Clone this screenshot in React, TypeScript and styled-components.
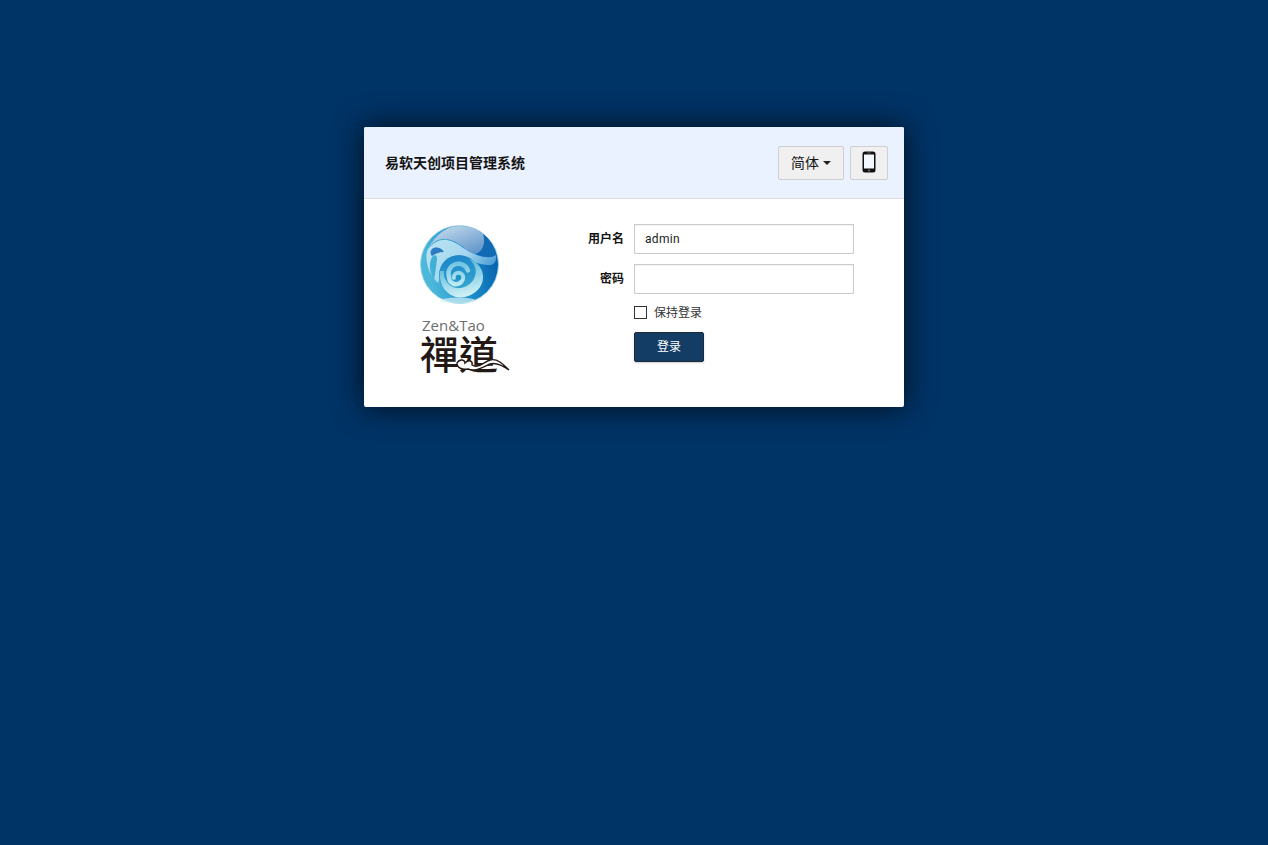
import React from 'react';
import styled, { createGlobalStyle } from 'styled-components';

const colors = {
  page: '#003366',
  head: '#EBF2FF',
  line: '#DDDDDD',
  ink: '#141414',
  field: '#CCCCCC',
  button: '#143D66',
};

const GlobalStyle = createGlobalStyle`
  html, body {
    margin: 0;
    height: 100%;
    background: ${colors.page};
    font-family: Roboto, "Liberation Sans", "Noto Sans CJK SC", sans-serif;
    font-size: 12px;
    color: ${colors.ink};
  }
`;

const Page = styled.div`
  display: flex;
  justify-content: center;
  padding-top: 127px;
`;

const Card = styled.div`
  width: 540px;
  height: 280px;
  box-sizing: border-box;
  background: #fff;
  border-radius: 2px;
  box-shadow: 0 0 30px rgba(0, 0, 0, 0.75);
  overflow: hidden;
`;

const Header = styled.div`
  height: 72px;
  box-sizing: border-box;
  display: flex;
  align-items: center;
  justify-content: space-between;
  padding: 0 16px 0 21px;
  background: ${colors.head};
  border-bottom: 1px solid ${colors.line};
`;

const Title = styled.h4`
  margin: 0 0 2px;
  font-size: 14px;
  font-weight: 700;
`;

const Actions = styled.div`
  display: flex;
  gap: 6px;
`;

const HeadButton = styled.button<{ $width: number }>`
  width: ${props => props.$width}px;
  height: 34px;
  padding: 0 0 2px;
  display: flex;
  align-items: center;
  justify-content: center;
  gap: 4px;
  background: #F0F0F0;
  border: 1px solid #CFCFCF;
  border-radius: 2px;
  font-family: inherit;
  font-size: 14px;
  color: ${colors.ink};
`;

const Caret = styled.span`
  width: 0;
  height: 0;
  margin-top: 2px;
  border-top: 4px solid #222;
  border-left: 4px solid transparent;
  border-right: 4px solid transparent;
`;

const Body = styled.div`
  display: flex;
  padding-top: 25px;
`;

const LogoColumn = styled.div`
  width: 204px;
  box-sizing: border-box;
  padding: 1px 0 0 56px;
`;

const SphereMark = styled.svg`
  display: block;
`;

const Zen = styled.div`
  margin: 13px 0 0 2px;
  height: 15px;
  font-family: "Open Sans", "Liberation Sans", sans-serif;
  font-size: 15px;
  line-height: 15px;
  color: #6E6E6E;
`;

const Tao = styled.div`
  position: relative;
  width: 90px;
  height: 38px;
  margin-top: 1px;
  font-family: "Noto Sans CJK TC", "Noto Sans CJK SC", sans-serif;
  font-size: 39px;
  font-weight: 500;
  line-height: 36px;
  color: #231815;
  white-space: nowrap;
`;

const CloudMark = styled.svg`
  position: absolute;
  left: 36px;
  top: 16px;
`;

const Form = styled.form`
  display: grid;
  grid-template-columns: 56px 220px;
  column-gap: 10px;
  row-gap: 10px;
  align-content: start;
  align-items: center;
`;

const Label = styled.label`
  padding-bottom: 4px;
  text-align: right;
  font-weight: 700;
  font-size: 12px;
`;

const Input = styled.input`
  width: 100%;
  height: 30px;
  box-sizing: border-box;
  padding: 0 10px;
  border: 1px solid ${colors.field};
  border-radius: 0;
  outline: none;
  font-family: inherit;
  font-size: 12px;
  letter-spacing: 0.3px;
  color: #222;
  box-shadow: inset 0 1px 2px rgba(0, 0, 0, 0.06);
`;

const Remember = styled.div`
  grid-column: 2;
  display: flex;
  align-items: center;
  gap: 7px;
  height: 17px;
  color: #333;
`;

const RememberText = styled.span`
  margin-top: -2px;
`;

const Box = styled.span`
  width: 11px;
  height: 11px;
  border: 1px solid #333;
  background: #fff;
`;

const Submit = styled.button`
  grid-column: 2;
  width: 70px;
  height: 30px;
  padding: 0 0 3px;
  margin-top: 1px;
  background: ${colors.button};
  border: 1px solid #1D2A3A;
  border-radius: 2px;
  box-shadow: 0 1px 2px rgba(0, 0, 0, 0.2);
  font-family: inherit;
  font-size: 12px;
  color: #fff;
`;

function PhoneIcon() {
  return (
    <svg width="14" height="22" viewBox="0 0 14 22">
      <rect x="0.5" y="0.5" width="13" height="21" rx="2.5" fill="#111" />
      <rect x="2" y="3.5" width="10" height="14" fill="#F4F8FF" />
      <circle cx="7" cy="19.6" r="1" fill="#777" />
      <rect x="5" y="1.6" width="4" height="0.8" fill="#666" />
    </svg>
  );
}

function Sphere() {
  return (
    <SphereMark width="80" height="80" viewBox="0 0 80 80">
      <defs>
        <linearGradient id="ball" x1="0.1" y1="0.6" x2="0.95" y2="0.4">
          <stop offset="0" stopColor="#4CB8DA" />
          <stop offset="0.5" stopColor="#2092CE" />
          <stop offset="1" stopColor="#0764B0" />
        </linearGradient>
        <linearGradient id="cap" x1="0.1" y1="0" x2="0.9" y2="1">
          <stop offset="0" stopColor="#C9DFEE" />
          <stop offset="1" stopColor="#5E93C9" />
        </linearGradient>
        <linearGradient id="band" x1="0" y1="0" x2="1" y2="0.5">
          <stop offset="0" stopColor="#BCE5F3" />
          <stop offset="0.6" stopColor="#A4D6EE" />
          <stop offset="1" stopColor="#4A9CD6" />
        </linearGradient>
        <linearGradient id="core" x1="0.3" y1="0" x2="0.5" y2="1">
          <stop offset="0" stopColor="#1C84C8" />
          <stop offset="1" stopColor="#38AAD2" />
        </linearGradient>
        <linearGradient id="coil" x1="0" y1="0" x2="0" y2="1">
          <stop offset="0" stopColor="#74C6E2" />
          <stop offset="1" stopColor="#BDEAF3" />
        </linearGradient>
        <linearGradient id="outer" x1="0.1" y1="0" x2="0.35" y2="1">
          <stop offset="0" stopColor="#3FAED6" />
          <stop offset="1" stopColor="#CDF0F5" />
        </linearGradient>
      </defs>
      <circle cx="39.5" cy="39.5" r="39" fill="url(#ball)" stroke="#A9D8E4" strokeWidth="0.9" />
      <path d="M8 24 C16 8 28 1 40 1 C50 1 58 4 64 10 C66 20 62 29 55 29 C46 27 38 14 24 14 C17 14 12 18 8 24 Z" fill="url(#cap)" />
      <path d="M63 9 C71 15 75 24 76 30 C72 33 62 33 56 29 C63 26 66 18 63 9 Z" fill="#1269B4" />
      <path d="M8 24 C14 17 21 14 27 15 C39 17 46 27 57 30 C65 33 72 33 76 30 C77 36 74 41 68 40 C55 39 50 35 40 33 C31 31 26 34 23 40 C20 47 20 54 18 58 C12 52 8 45 7 38 C6 33 6 28 8 24 Z" fill="url(#band)" />
      <path d="M12 24 C16 21 22 23 24 27 C19 27 15 29 12 31 C10 29 10 26 12 24 Z" fill="#2B7CBE" />
      <path d="M12 32 C15 29 17 30 17 34 C16 42 15 50 14 54 C9 47 9 38 12 32 Z" fill="#3FB0D6" />
      <circle cx="39" cy="50" r="20" fill="url(#core)" />
      <path d="M20 46 C18 62 30 75 45 72 C58 69 66 58 62 46 C60 40 55 36 49 34 C55 39 57 45 55 51 C53 59 44 64 36 63 C28 61 23 54 24 46 Z" fill="url(#outer)" />
      <path d="M34 52.500 A4.500 4.500 0 0 1 43 52.500 A7 7 0 0 1 29 52 A10 10 0 0 1 48 45.500" fill="none" stroke="url(#coil)" strokeWidth="4.400" strokeLinecap="round" />
      <circle cx="38.500" cy="52.500" r="2.800" fill="#1F92C8" />
      <ellipse cx="38" cy="75.500" rx="18" ry="3" fill="#D8F4F7" opacity="0.7" />
    </SphereMark>
  );
}

function Cloud() {
  return (
    <CloudMark width="54" height="22" viewBox="0 0 54 22">
      <path
        d="M1 13 C4 8 9 10 9 13 C13 9 17 11 16 15 C22 19 28 12 34 10 C41 8 47 14 53 20 C46 15 40 12 34 14 C27 17 20 22 12 19 C6 20 1 18 1 13 Z"
        fill="#fff"
        stroke="#231815"
        strokeWidth="1.4"
      />
    </CloudMark>
  );
}

export default function App() {
  return (
    <Page>
      <GlobalStyle />
      <Card>
        <Header>
          <Title>易软天创项目管理系统</Title>
          <Actions>
            <HeadButton type="button" $width={66}>
              简体 <Caret />
            </HeadButton>
            <HeadButton type="button" $width={38}>
              <PhoneIcon />
            </HeadButton>
          </Actions>
        </Header>
        <Body>
          <LogoColumn>
            <Sphere />
            <Zen>Zen&amp;Tao</Zen>
            <Tao>
              禪道
              <Cloud />
            </Tao>
          </LogoColumn>
          <Form>
            <Label>用户名</Label>
            <Input defaultValue="admin" />
            <Label>密码</Label>
            <Input type="password" />
            <Remember>
              <Box />
              <RememberText>保持登录</RememberText>
            </Remember>
            <Submit type="button">登录</Submit>
          </Form>
        </Body>
      </Card>
    </Page>
  );
}
